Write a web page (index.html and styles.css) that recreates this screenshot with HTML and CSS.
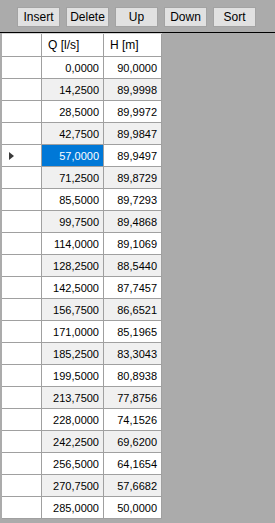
FILE: index.html
```html
<!DOCTYPE html>
<html lang="en">
<head>
    <meta charset="UTF-8">
    <title>Pump curve</title>
    <link rel="stylesheet" href="styles.css">
</head>
<body>

    <!-- toolbar -->
    <div class="toolbar">
        <button class="btn">Insert</button>
        <button class="btn">Delete</button>
        <button class="btn">Up</button>
        <button class="btn">Down</button>
        <button class="btn">Sort</button>
    </div>

    <!-- data grid -->
    <div class="grid-box">
        <div class="grid">
            <div class="row head">
                <div class="cell rh"></div>
                <div class="cell">Q [l/s]</div>
                <div class="cell">H [m]</div>
            </div>
            <div class="row"><div class="cell rh"></div><div class="cell num">0,0000</div><div class="cell num">90,0000</div></div>
            <div class="row alt"><div class="cell rh"></div><div class="cell num">14,2500</div><div class="cell num">89,9998</div></div>
            <div class="row"><div class="cell rh"></div><div class="cell num">28,5000</div><div class="cell num">89,9972</div></div>
            <div class="row alt"><div class="cell rh"></div><div class="cell num">42,7500</div><div class="cell num">89,9847</div></div>
            <div class="row"><div class="cell rh"><span class="arrow"></span></div><div class="cell num selected">57,0000</div><div class="cell num">89,9497</div></div>
            <div class="row alt"><div class="cell rh"></div><div class="cell num">71,2500</div><div class="cell num">89,8729</div></div>
            <div class="row"><div class="cell rh"></div><div class="cell num">85,5000</div><div class="cell num">89,7293</div></div>
            <div class="row alt"><div class="cell rh"></div><div class="cell num">99,7500</div><div class="cell num">89,4868</div></div>
            <div class="row"><div class="cell rh"></div><div class="cell num">114,0000</div><div class="cell num">89,1069</div></div>
            <div class="row alt"><div class="cell rh"></div><div class="cell num">128,2500</div><div class="cell num">88,5440</div></div>
            <div class="row"><div class="cell rh"></div><div class="cell num">142,5000</div><div class="cell num">87,7457</div></div>
            <div class="row alt"><div class="cell rh"></div><div class="cell num">156,7500</div><div class="cell num">86,6521</div></div>
            <div class="row"><div class="cell rh"></div><div class="cell num">171,0000</div><div class="cell num">85,1965</div></div>
            <div class="row alt"><div class="cell rh"></div><div class="cell num">185,2500</div><div class="cell num">83,3043</div></div>
            <div class="row"><div class="cell rh"></div><div class="cell num">199,5000</div><div class="cell num">80,8938</div></div>
            <div class="row alt"><div class="cell rh"></div><div class="cell num">213,7500</div><div class="cell num">77,8756</div></div>
            <div class="row"><div class="cell rh"></div><div class="cell num">228,0000</div><div class="cell num">74,1526</div></div>
            <div class="row alt"><div class="cell rh"></div><div class="cell num">242,2500</div><div class="cell num">69,6200</div></div>
            <div class="row"><div class="cell rh"></div><div class="cell num">256,5000</div><div class="cell num">64,1654</div></div>
            <div class="row alt"><div class="cell rh"></div><div class="cell num">270,7500</div><div class="cell num">57,6682</div></div>
            <div class="row"><div class="cell rh"></div><div class="cell num">285,0000</div><div class="cell num">50,0000</div></div>
        </div>
    </div>

</body>
</html>
```

FILE: styles.css
```css
body {
    margin: 0;
    background-color: #ababab;
    font-family: "Liberation Sans", Arial, sans-serif;
    font-size: 11px;
    color: #000;
    height: 523px;
    overflow: hidden;
}

/* toolbar with buttons */
.toolbar {
    height: 32px;
    display: flex;
    gap: 6px;
    padding: 7px 0 0 17px;
    box-sizing: border-box;
}

.btn {
    width: 43px;
    height: 20px;
    padding: 0;
    margin: 0;
    font-family: inherit;
    font-size: 12px;
    color: #000;
    background-color: #e1e1e1;
    border: 1px solid #a3a3a3;
    border-radius: 0;
}

/* grid area */
.grid-box {
    border-top: 1px solid #000;
    padding-left: 2px;
}

.grid {
    display: flex;
    flex-direction: column;
    width: 160px;
}

.row {
    display: grid;
    grid-template-columns: 40px 62px 58px;
    height: 22px;
}

.row.head {
    height: 24px;
    border-top: 1px solid #d4d4d4;
    box-sizing: border-box;
}

.cell {
    background-color: #fff;
    border-right: 1px solid #a0a0a0;
    border-bottom: 1px solid #a0a0a0;
    display: flex;
    align-items: center;
    padding: 0 6px;
    white-space: nowrap;
}

.head .cell {
    padding-left: 6px;
    font-size: 12px;
}

.num {
    justify-content: flex-end;
    padding: 0 4px 0 0;
}

.alt .num {
    background-color: #f0f0f0;
}

.cell.rh {
    background-color: #fff;
    padding: 0 0 0 7px;
}

.selected,
.alt .selected {
    background-color: #0078d7;
    color: #fff;
}

/* current row marker */
.arrow {
    width: 0;
    height: 0;
    border-top: 4px solid transparent;
    border-bottom: 4px solid transparent;
    border-left: 5px solid #3a3a3a;
}
```
